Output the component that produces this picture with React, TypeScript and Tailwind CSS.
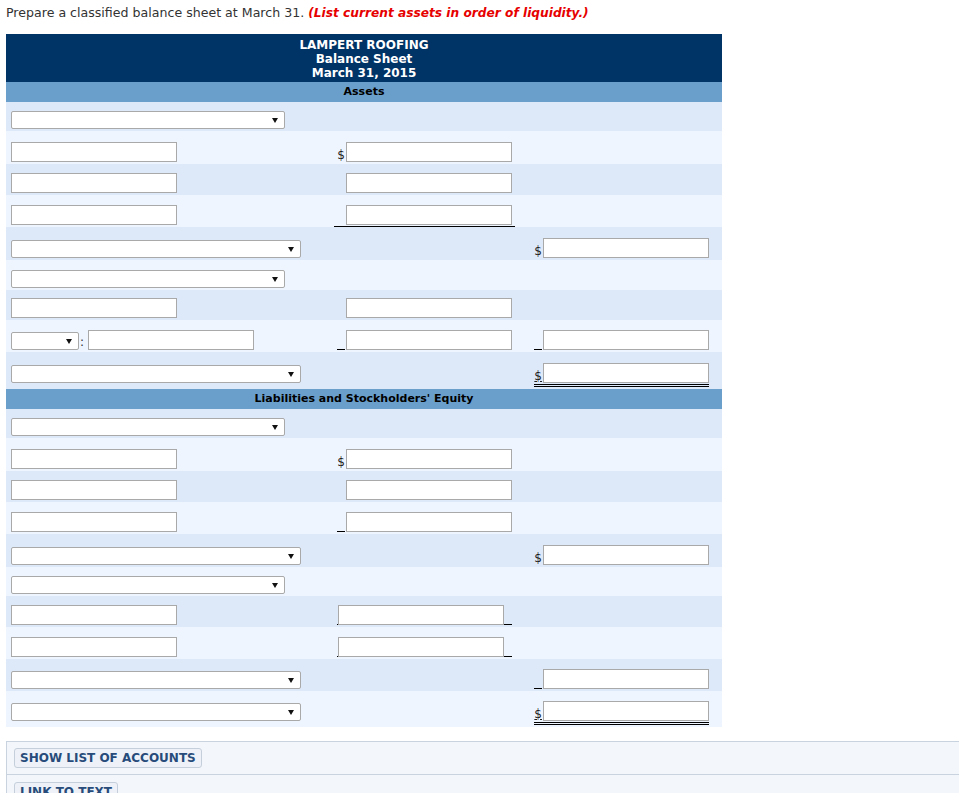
import React from "react";

const FONT = { fontFamily: '"DejaVu Sans", Verdana, sans-serif' };

type LeftKind = "select" | "selectWide" | "input" | "pair";

interface MidCell {
  prefix?: "$" | "_";
  underline?: boolean;
  shifted?: boolean;
}

interface RightCell {
  prefix?: "$" | "_" | "$u";
  double?: boolean;
}

interface RowSpec {
  h: string;
  dark: boolean;
  left: LeftKind;
  mid?: MidCell;
  right?: RightCell;
}

function Arrow() {
  return (
    <svg width="6" height="5" viewBox="0 0 6 5" className="shrink-0">
      <polygon points="0,0 6,0 3,5" fill="#111" />
    </svg>
  );
}

function Select({ width }: { width: string }) {
  return (
    <div
      className={`${width} h-[18px] bg-white border border-[#a9a9a9] rounded-[2px] flex items-center justify-end pr-[6px]`}
    >
      <Arrow />
    </div>
  );
}

function Box({ width = "w-[166px]" }: { width?: string }) {
  return <input className={`${width} h-[20px] bg-white border border-[#a9a9a9] outline-none`} />;
}

function Prefix({ kind, width }: { kind?: "$" | "_" | "$u"; width: string }) {
  return (
    <div className={`${width} h-[20px] flex items-end justify-end pr-[1px]`}>
      {kind === "$" && <span className="text-[12px] leading-[14px] text-[#222]">$</span>}
      {kind === "$u" && <span className="text-[12px] leading-[14px] text-[#222] underline">$</span>}
      {kind === "_" && <span className="w-[8px] border-b border-black" />}
    </div>
  );
}

function Left({ kind }: { kind: LeftKind }) {
  if (kind === "select") return <Select width="w-[274px]" />;
  if (kind === "selectWide") return <Select width="w-[290px]" />;
  if (kind === "input") return <Box />;
  return (
    <div className="flex items-end">
      <Select width="w-[68px]" />
      <span className="w-[9px] text-[12px] leading-[14px] text-[#333] pl-[1px] pb-[1px]">:</span>
      <Box />
    </div>
  );
}

function Mid({ cell }: { cell: MidCell }) {
  if (cell.shifted) {
    return (
      <div className="flex items-end pl-[3px]">
        <span className="w-[1px] h-[1px] bg-black" />
        <Box />
        <span className="w-[8px] border-b border-black" />
      </div>
    );
  }
  return (
    <div
      className={`flex items-end w-[181px] ${cell.underline ? "border-b border-black pb-[1px] -mb-[2px]" : ""}`}
    >
      <Prefix kind={cell.prefix} width="w-[12px]" />
      <Box />
    </div>
  );
}

function Right({ cell }: { cell: RightCell }) {
  return (
    <div
      className={`flex items-end w-[175px] ${cell.double ? "border-b-[3px] border-double border-black pb-[1px]" : ""}`}
    >
      <Prefix kind={cell.prefix} width="w-[9px]" />
      <Box />
    </div>
  );
}

function Row({ row }: { row: RowSpec }) {
  const bg = row.dark ? "bg-[#dde8f8]" : "bg-[#eef5fe]";
  const lifted = row.right?.double;
  return (
    <div className={`${bg} ${row.h} flex items-end pl-[5px] pb-[2px]`}>
      <div className={`w-[323px] flex items-end ${lifted ? "pb-[4px]" : ""}`}>
        <Left kind={row.left} />
      </div>
      <div className="w-[181px] flex items-end">{row.mid && <Mid cell={row.mid} />}</div>
      <div className="w-[19px]" />
      <div className="w-[175px] flex items-end">{row.right && <Right cell={row.right} />}</div>
    </div>
  );
}

const assets: RowSpec[] = [
  { h: "h-[29px]", dark: true, left: "select" },
  { h: "h-[33px]", dark: false, left: "input", mid: { prefix: "$" } },
  { h: "h-[31px]", dark: true, left: "input", mid: {} },
  { h: "h-[32px]", dark: false, left: "input", mid: { underline: true } },
  { h: "h-[33px]", dark: true, left: "selectWide", right: { prefix: "$" } },
  { h: "h-[30px]", dark: false, left: "select" },
  { h: "h-[30px]", dark: true, left: "input", mid: {} },
  { h: "h-[32px]", dark: false, left: "pair", mid: { prefix: "_" }, right: { prefix: "_" } },
  { h: "h-[37px]", dark: true, left: "selectWide", right: { prefix: "$u", double: true } },
];

const liabilities: RowSpec[] = [
  { h: "h-[29px]", dark: true, left: "select" },
  { h: "h-[33px]", dark: false, left: "input", mid: { prefix: "$" } },
  { h: "h-[31px]", dark: true, left: "input", mid: {} },
  { h: "h-[32px]", dark: false, left: "input", mid: { prefix: "_" } },
  { h: "h-[33px]", dark: true, left: "selectWide", right: { prefix: "$" } },
  { h: "h-[29px]", dark: false, left: "select" },
  { h: "h-[31px]", dark: true, left: "input", mid: { shifted: true } },
  { h: "h-[32px]", dark: false, left: "input", mid: { shifted: true } },
  { h: "h-[32px]", dark: true, left: "selectWide", right: { prefix: "_" } },
  { h: "h-[36px]", dark: false, left: "selectWide", right: { prefix: "$u", double: true } },
];

function SectionBar({ title }: { title: string }) {
  return (
    <div className="h-[20px] bg-[#6a9fcc] flex items-center justify-center text-[11px] font-bold text-black">
      {title}
    </div>
  );
}

function PanelButton({ label }: { label: string }) {
  return (
    <button className="h-[20px] px-[5px] bg-[#eef2f8] border border-[#c5cfdc] rounded-[3px] text-[12px] font-bold text-[#274b7a] leading-none">
      {label}
    </button>
  );
}

export default function App() {
  return (
    <div className="w-[959px] h-[793px] overflow-hidden bg-white" style={FONT}>
      <div className="h-[34px] pl-[6px] pt-[5px] text-[12.6px] leading-[16px] text-[#333]">
        Prepare a classified balance sheet at March 31.{" "}
        <span className="font-bold italic text-[#e60000] text-[12.2px]">
          (List current assets in order of liquidity.)
        </span>
      </div>

      <div className="ml-[6px] w-[716px]">
        <div className="bg-[#003366] text-white font-bold text-[12px] leading-[14px] text-center pt-[4px] pb-[2px]">
          <div>LAMPERT ROOFING</div>
          <div>Balance Sheet</div>
          <div>March 31, 2015</div>
        </div>
        <SectionBar title="Assets" />
        {assets.map((r, i) => (
          <Row key={`a${i}`} row={r} />
        ))}
        <SectionBar title="Liabilities and Stockholders' Equity" />
        {liabilities.map((r, i) => (
          <Row key={`l${i}`} row={r} />
        ))}
      </div>

      <div className="mt-[14px] ml-[6px] bg-[#f3f6fa] border-t border-l border-[#c9d3e0]">
        <div className="h-[33px] pl-[7px] pt-[6px] flex items-start border-b border-[#c9d3e0]">
          <PanelButton label="SHOW LIST OF ACCOUNTS" />
        </div>
        <div className="h-[40px] pl-[7px] pt-[7px] flex items-start">
          <PanelButton label="LINK TO TEXT" />
        </div>
      </div>
    </div>
  );
}
